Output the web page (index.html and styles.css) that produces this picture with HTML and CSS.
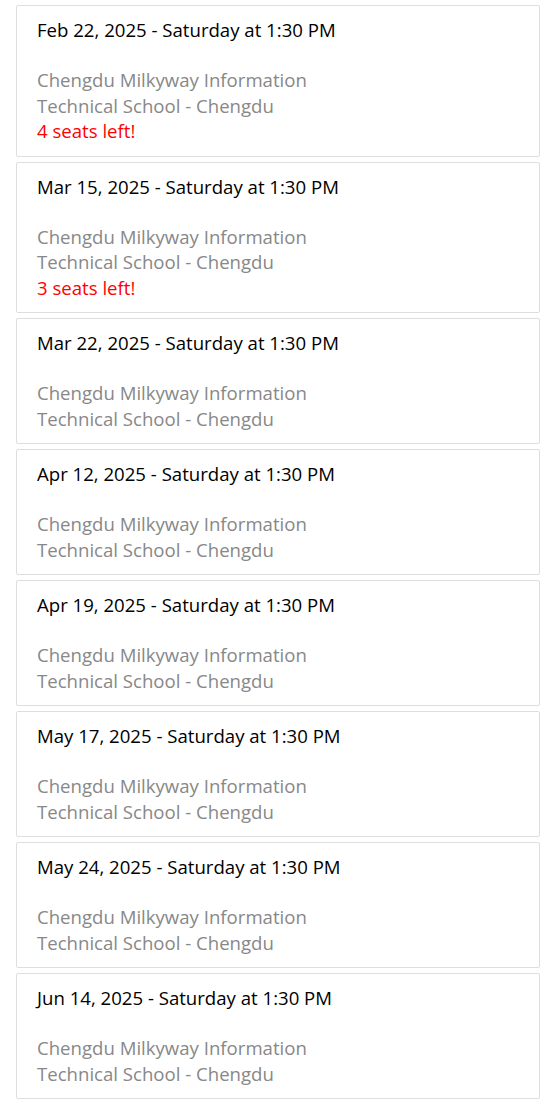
FILE: index.html
```html
<!DOCTYPE html>
<html>
<head>
<meta charset="utf-8">
<link rel="stylesheet" href="styles.css">
</head>
<body>
<div class="list">
  <div class="card">
    <div class="date">Feb 22, 2025 - Saturday at 1:30 PM</div>
    <div class="place">Chengdu Milkyway Information<br>Technical School - Chengdu</div>
    <div class="seats">4 seats left!</div>
  </div>
  <div class="card">
    <div class="date">Mar 15, 2025 - Saturday at 1:30 PM</div>
    <div class="place">Chengdu Milkyway Information<br>Technical School - Chengdu</div>
    <div class="seats">3 seats left!</div>
  </div>
  <div class="card">
    <div class="date">Mar 22, 2025 - Saturday at 1:30 PM</div>
    <div class="place">Chengdu Milkyway Information<br>Technical School - Chengdu</div>
  </div>
  <div class="card">
    <div class="date">Apr 12, 2025 - Saturday at 1:30 PM</div>
    <div class="place">Chengdu Milkyway Information<br>Technical School - Chengdu</div>
  </div>
  <div class="card">
    <div class="date">Apr 19, 2025 - Saturday at 1:30 PM</div>
    <div class="place">Chengdu Milkyway Information<br>Technical School - Chengdu</div>
  </div>
  <div class="card">
    <div class="date">May 17, 2025 - Saturday at 1:30 PM</div>
    <div class="place">Chengdu Milkyway Information<br>Technical School - Chengdu</div>
  </div>
  <div class="card">
    <div class="date">May 24, 2025 - Saturday at 1:30 PM</div>
    <div class="place">Chengdu Milkyway Information<br>Technical School - Chengdu</div>
  </div>
  <div class="card">
    <div class="date">Jun 14, 2025 - Saturday at 1:30 PM</div>
    <div class="place">Chengdu Milkyway Information<br>Technical School - Chengdu</div>
  </div>
</div>
</body>
</html>
```
FILE: styles.css
```css
html, body {
  margin: 0;
  padding: 0;
  background: #fff;
}
body {
  font-family: "Open Sans", "Noto Sans", sans-serif;
  font-size: 18.6px;
  line-height: 25.5px;
  color: #000;
}
.list {
  display: flex;
  flex-direction: column;
  gap: 5px;
  padding: 5px 14px 0 16px;
}
.card {
  border: 1px solid #dedede;
  border-radius: 2px;
  padding: 11px 20px 12px 20px;
}
.date {
  margin-bottom: 24.5px;
}
.place {
  color: #888;
}
.seats {
  color: #f00;
}
```
